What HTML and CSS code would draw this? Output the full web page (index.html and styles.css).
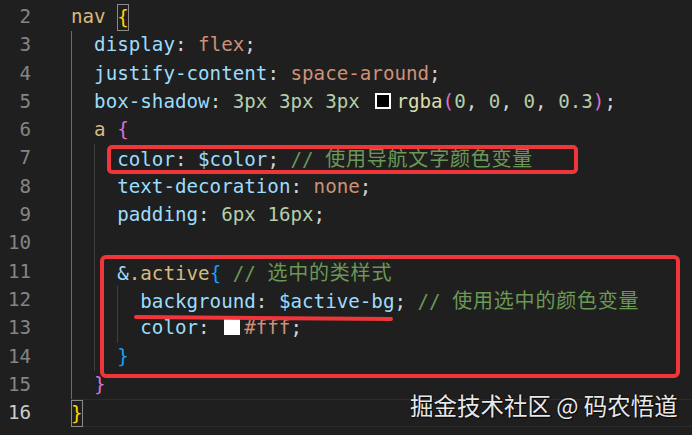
FILE: index.html
```html
<!DOCTYPE html>
<html>
<head>
<meta charset="utf-8">
<link rel="stylesheet" href="styles.css">
</head>
<body>
<div class="editor">
  <div class="line"><span class="ln">2</span><span class="code"><span class="sel">nav</span> <span class="bm y">{</span></span></div>
  <div class="line"><span class="ln">3</span><span class="code"><span class="ind act"></span><span class="prop">display</span>: <span class="str">flex</span>;</span></div>
  <div class="line"><span class="ln">4</span><span class="code"><span class="ind act"></span><span class="prop">justify-content</span>: <span class="str">space-around</span>;</span></div>
  <div class="line"><span class="ln">5</span><span class="code"><span class="ind act"></span><span class="prop">box-shadow</span>: <span class="num">3px</span> <span class="num">3px</span> <span class="num">3px</span> <span class="sw hollow"></span><span class="fn">rgba</span><span class="p">(</span><span class="num">0</span>, <span class="num">0</span>, <span class="num">0</span>, <span class="num">0.3</span><span class="p">)</span>;</span></div>
  <div class="line"><span class="ln">6</span><span class="code"><span class="ind act"></span><span class="sel">a</span> <span class="p">{</span></span></div>
  <div class="line"><span class="ln">7</span><span class="code"><span class="ind act"></span><span class="ind"></span><span class="prop">color</span>: <span class="prop">$color</span>; <span class="cmt">// <span class="cjk">使用导航文字颜色变量</span></span></span></div>
  <div class="line"><span class="ln">8</span><span class="code"><span class="ind act"></span><span class="ind"></span><span class="prop">text-decoration</span>: <span class="str">none</span>;</span></div>
  <div class="line"><span class="ln">9</span><span class="code"><span class="ind act"></span><span class="ind"></span><span class="prop">padding</span>: <span class="num">6px</span> <span class="num">16px</span>;</span></div>
  <div class="line"><span class="ln">10</span><span class="code"><span class="ind act"></span><span class="ind"></span></span></div>
  <div class="line"><span class="ln">11</span><span class="code"><span class="ind act"></span><span class="ind"></span><span class="prop">&amp;</span><span class="sel">.active</span><span class="b">{</span> <span class="cmt">// <span class="cjk">选中的类样式</span></span></span></div>
  <div class="line"><span class="ln">12</span><span class="code"><span class="ind act"></span><span class="ind"></span><span class="ind"></span><span class="prop">background</span>: <span class="prop">$active-bg</span>; <span class="cmt">// <span class="cjk">使用选中的颜色变量</span></span></span></div>
  <div class="line"><span class="ln">13</span><span class="code"><span class="ind act"></span><span class="ind"></span><span class="ind"></span><span class="prop">color</span>: <span class="sw white"></span><span class="str">#fff</span>;</span></div>
  <div class="line"><span class="ln">14</span><span class="code"><span class="ind act"></span><span class="ind"></span><span class="b">}</span></span></div>
  <div class="line"><span class="ln">15</span><span class="code"><span class="ind act"></span><span class="p">}</span></span></div>
  <div class="line current"><span class="ln">16</span><span class="code"><span class="bm y">}</span></span></div>

  <div class="mark box1"></div>
  <div class="mark box2"></div>
  <div class="mark underline"></div>
  <div class="watermark">掘金技术社区 @ 码农悟道</div>
</div>
</body>
</html>
```

FILE: styles.css
```css
html, body {
  margin: 0;
  padding: 0;
  background: #1f1f1f;
}

.editor {
  position: relative;
  width: 692px;
  height: 435px;
  overflow: hidden;
  background: #1f1f1f;
  padding-top: 3px;
  box-sizing: border-box;
  font-family: "DejaVu Sans Mono", "Noto Sans CJK SC", monospace;
  font-size: 19.2px;
  color: #d4d4d4;
}

.line {
  display: flex;
  height: 28.3px;
  line-height: 28.3px;
  white-space: pre;
}

.ln {
  width: 31px;
  flex: none;
  text-align: right;
  color: #858585;
}

.current .ln {
  color: #cccccc;
}

.code {
  display: block;
  margin-left: 40px;
  flex: 1;
  height: 28.3px;
}

.current .code {
  box-shadow: inset 0 1px 0 #2c2c2c, inset 0 -1px 0 #2c2c2c;
}

.ind {
  display: inline-block;
  width: 2ch;
  height: 28.3px;
  vertical-align: top;
  box-shadow: inset 1px 0 0 #404040;
}

.ind.act {
  box-shadow: inset 1px 0 0 #6b6b6b;
}

.sel { color: #d7ba7d; }
.prop { color: #9cdcfe; }
.str { color: #ce9178; }
.num { color: #b5cea8; }
.fn { color: #dcdcaa; }
.p { color: #da70d6; }
.b { color: #179fff; }
.y { color: #ffd700; }
.cmt { color: #6a9955; }

.bm {
  display: inline-block;
  vertical-align: top;
  margin-top: 1px;
  height: 27px;
  line-height: 27px;
  box-shadow: inset 0 0 0 1px #8a8a8a;
}

.cjk {
  font-family: "Noto Sans CJK SC", sans-serif;
  font-size: 20px;
  letter-spacing: 0.8px;
}

.sw {
  display: inline-block;
  width: 16px;
  height: 16px;
  box-sizing: border-box;
  vertical-align: -1px;
}

.sw.hollow {
  border: 2px solid #ffffff;
  background: #000000;
  margin: 0 5px 0 4px;
}

.sw.white {
  background: #ffffff;
  margin: 0 4px 0 3px;
}

.mark {
  position: absolute;
  box-sizing: border-box;
}

.box1 {
  left: 107px;
  top: 145px;
  width: 471px;
  height: 29px;
  border: 4px solid #f0363b;
  border-radius: 5px;
}

.box2 {
  left: 100px;
  top: 255px;
  width: 580px;
  height: 123px;
  border: 4.5px solid #f0363b;
  border-radius: 6px;
}

.underline {
  left: 134px;
  top: 316px;
  width: 259px;
  height: 4px;
  background: #f0363b;
  border-radius: 2px;
  transform: rotate(0.4deg);
}

.watermark {
  position: absolute;
  left: 410px;
  top: 389px;
  font-family: "Noto Sans CJK SC", sans-serif;
  font-size: 23.5px;
  line-height: 32px;
  color: rgba(255, 255, 255, 0.92);
  text-shadow: 0 0 2px rgba(0, 0, 0, 0.8), 1px 1px 1px rgba(0, 0, 0, 0.6);
  white-space: nowrap;
}
```
